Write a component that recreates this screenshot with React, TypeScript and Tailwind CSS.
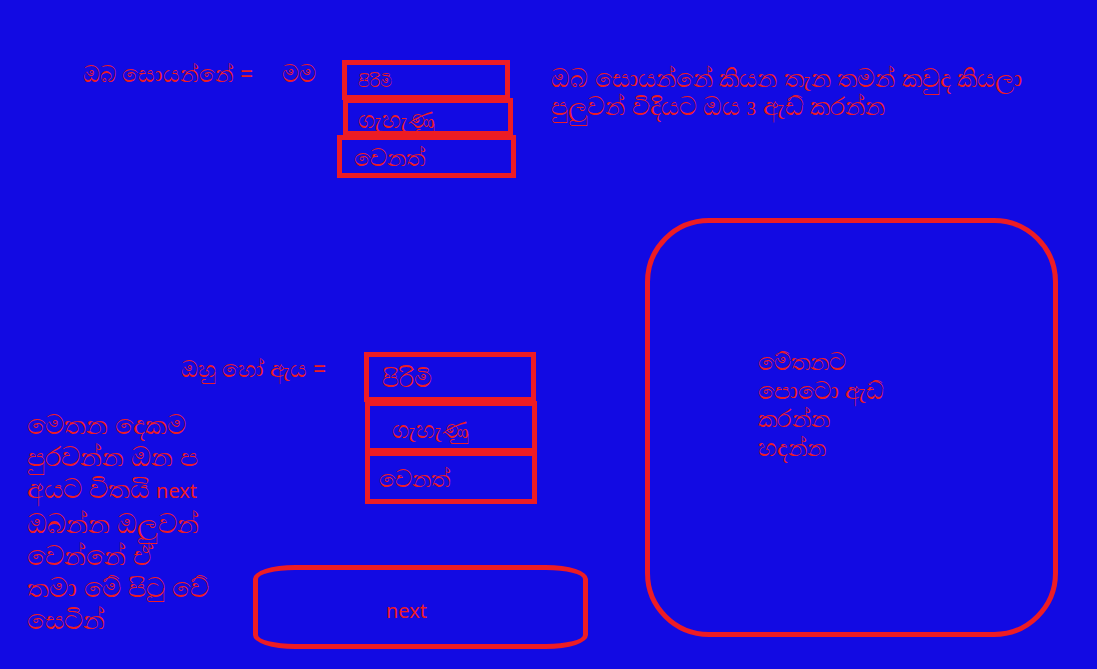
import React from 'react';

function OptionBox({ label, className, textClass }: { label: string; className: string; textClass: string }) {
  return (
    <div className={`flex items-center border-[5px] border-[#ed1c24] ${className}`}>
      <span className={`whitespace-nowrap leading-none text-[#ed1c24] ${textClass}`}>{label}</span>
    </div>
  );
}

export default function App() {
  return (
    <div className="h-[669px] w-[1097px] overflow-hidden bg-[#120ae3] font-['Noto_Sans',sans-serif] text-[#ed1c24]">
      {/* top row: who are you */}
      <div className="flex h-[218px] items-start pt-[58px]">
        <span className="ml-[83px] w-[199px] whitespace-nowrap text-[23px] leading-[30px]">ඔබ සොයන්නේ =</span>
        <span className="w-[55px] whitespace-nowrap text-[24px] leading-[30px]">මම</span>
        <div className="mt-[2px] flex flex-col">
          <OptionBox label="පිරිමි" className="ml-[5px] h-[40px] w-[168px] pl-[11px]" textClass="text-[17px]" />
          <OptionBox label="ගැහැණු" className="-mt-[2px] ml-[6px] h-[38px] w-[170px] pl-[10px] pt-[3px]" textClass="text-[24px]" />
          <OptionBox label="වෙනත්" className="-mt-[1px] h-[43px] w-[179px] pl-[12px]" textClass="text-[24px]" />
        </div>
        <p className="ml-[35px] mt-[5px] whitespace-nowrap text-[25px] leading-[28px]">
          ඔබ සොයන්නේ කියන තැන තමන් කවුද කියලා
          <br />
          පුලුවන් විදියට ඔය <span className="font-['Liberation_Serif',serif] text-[19px]">3</span> ඇඩ් කරන්න
        </p>
      </div>

      {/* bottom row */}
      <div className="flex h-[451px] items-start">
        <div className="flex w-[645px] items-start">
          <div className="flex w-[253px] flex-col">
            <span className="ml-[181px] mt-[135px] whitespace-nowrap text-[23px] leading-[30px]">ඔහු හෝ ඇය =</span>
            <p className="ml-[27px] mt-[25px] whitespace-nowrap text-[27px] leading-[32px]">
              මෙතන දෙකම
              <br />
              පුරවන්න ඔන ප
              <br />
              අයට විතයි <span className="text-[20px]">next</span>
              <br />
              ඔබන්න ඔලුවන්
              <br />
              වෙන්නේ  ඒ
              <br />
              තමා මේ පිටු වේ
              <br />
              සෙටින්
            </p>
          </div>
          <div className="flex flex-col">
            <div className="ml-[111px] mt-[134px] flex flex-col">
              <OptionBox label="පිරිමි" className="h-[50px] w-[172px] pl-[13px]" textClass="text-[25px]" />
              <OptionBox label="ගැහැණු" className="-mt-[1px] ml-[1px] h-[52px] w-[172px] pl-[22px] pt-[4px]" textClass="text-[24px]" />
              <OptionBox label="වෙනත්" className="-mt-[2px] ml-[1px] h-[53px] w-[172px] pl-[9px]" textClass="text-[24px]" />
            </div>
            <button className="mt-[61px] flex h-[84px] w-[335px] items-center justify-center rounded-[42px/14px] border-[5px] border-[#ed1c24] pr-[28px] pt-[8px] text-[20px] text-[#ed1c24]">
              next
            </button>
          </div>
        </div>

        {/* photo drop area */}
        <div className="h-[419px] w-[413px] rounded-[64px] border-[5px] border-[#ed1c24] pl-[108px] pt-[124px]">
          <p className="whitespace-nowrap text-[24px] leading-[28.5px]">
            මේතනට
            <br />
            පොටො ඇඩ්
            <br />
            කරන්න
            <br />
            හදන්න
          </p>
        </div>
      </div>
    </div>
  );
}
